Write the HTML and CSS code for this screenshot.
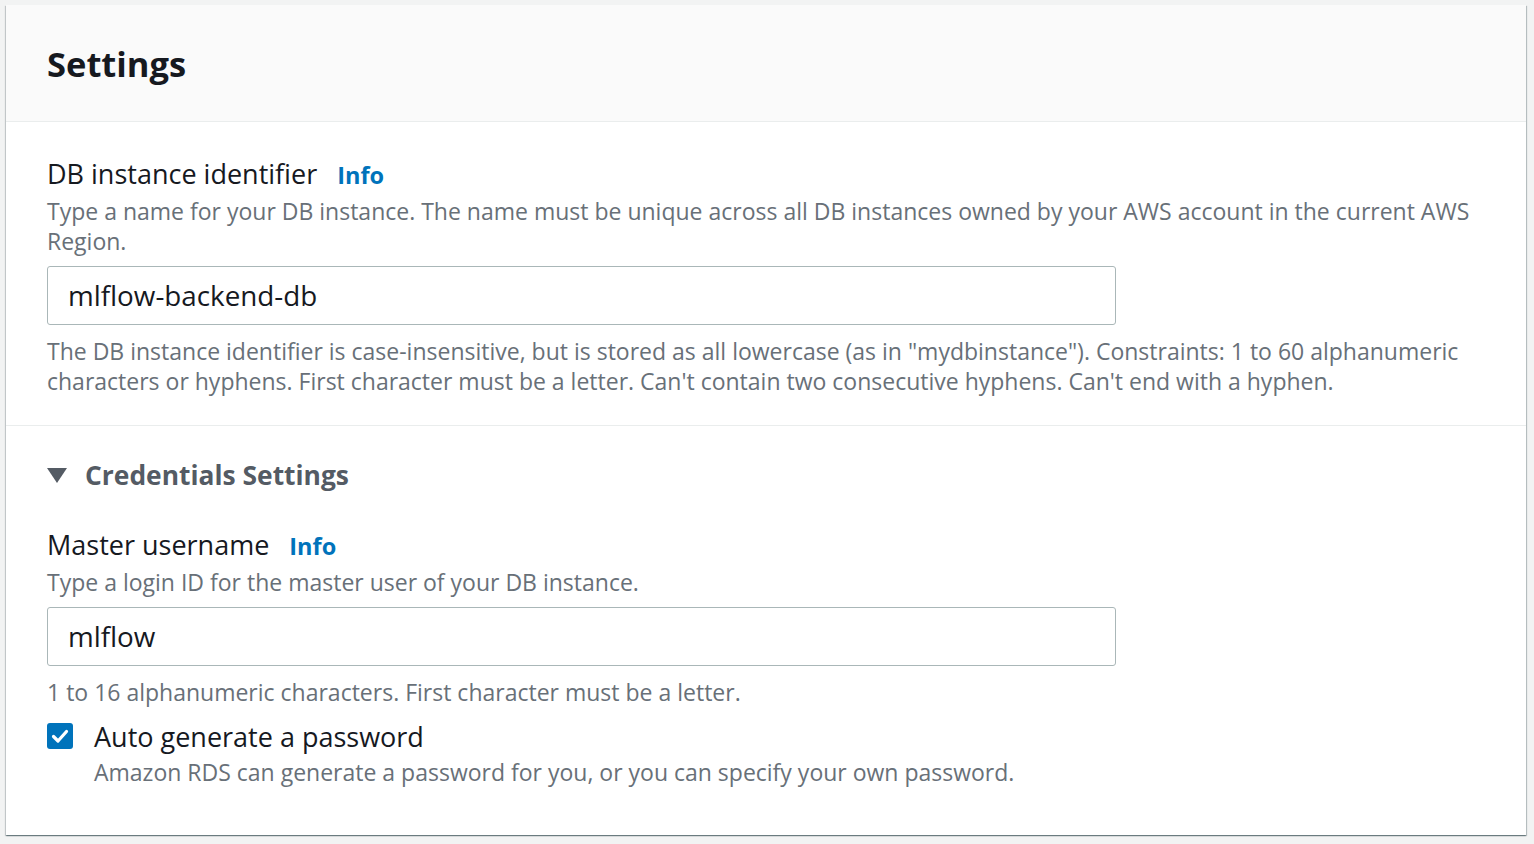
FILE: index.html
```html
<!DOCTYPE html>
<html lang="en">
<head>
<meta charset="utf-8">
<title>Settings</title>
<link rel="stylesheet" href="styles.css">
</head>
<body>
<div class="card">
  <div class="card-header">
    <h2 class="title">Settings</h2>
  </div>
  <div class="section first">
    <div class="label-row"><span class="label">DB instance identifier</span><a class="info">Info</a></div>
    <div class="desc">Type a name for your DB instance. The name must be unique across all DB instances owned by your AWS account in the current AWS Region.</div>
    <div class="input">mlflow-backend-db</div>
    <div class="constraint">The DB instance identifier is case-insensitive, but is stored as all lowercase (as in "mydbinstance"). Constraints: 1 to 60 alphanumeric characters or hyphens. First character must be a letter. Can't contain two consecutive hyphens. Can't end with a hyphen.</div>
  </div>
  <div class="section second">
    <div class="expander"><span class="caret"></span><span class="exp-title">Credentials Settings</span></div>
    <div class="label-row mu"><span class="label">Master username</span><a class="info">Info</a></div>
    <div class="desc">Type a login ID for the master user of your DB instance.</div>
    <div class="input">mlflow</div>
    <div class="constraint">1 to 16 alphanumeric characters. First character must be a letter.</div>
    <div class="check-row">
      <span class="checkbox"><svg width="26" height="26" viewBox="0 0 26 26"><path d="M6.5 13.5 L11 18 L19.5 8.5" fill="none" stroke="#fff" stroke-width="3.2" stroke-linecap="round" stroke-linejoin="round"/></svg></span>
      <div class="check-text">
        <div class="check-label">Auto generate a password</div>
        <div class="check-desc">Amazon RDS can generate a password for you, or you can specify your own password.</div>
      </div>
    </div>
  </div>
</div>
</body>
</html>
```
FILE: styles.css
```css
html, body {
  margin: 0;
  padding: 0;
}
body {
  background: #f2f3f3;
  font-family: "Open Sans", "Noto Sans", Arial, sans-serif;
  color: #16191f;
  padding: 5px 8px 9px 6px;
}
.card {
  background: #ffffff;
  box-shadow: 0 1px 1px 0 rgba(0, 28, 36, 0.35), 1px 1px 1px 0 rgba(0, 28, 36, 0.2), -1px 1px 1px 0 rgba(0, 28, 36, 0.15);
}
.card-header {
  background: #fafafa;
  border-bottom: 1px solid #eaeded;
  height: 117px;
  box-sizing: border-box;
  padding-left: 41px;
  display: flex;
  align-items: center;
}
.title {
  margin: 0;
  font-size: 34.5px;
  font-weight: 700;
  color: #16191f;
  line-height: 40px;
  position: relative;
  top: 1px;
}
.section {
  padding-left: 41px;
  padding-right: 41px;
}
.section.first {
  padding-top: 35px;
  padding-bottom: 29px;
  border-bottom: 1px solid #eaeded;
}
.section.second {
  padding-top: 32px;
  padding-bottom: 48px;
}
.label-row {
  display: flex;
  align-items: baseline;
  gap: 20px;
  line-height: 34px;
}
.label {
  font-size: 27px;
  color: #16191f;
}
.info {
  font-size: 23.5px;
  font-weight: 700;
  color: #0073bb;
}
.desc {
  margin-top: 4px;
  font-size: 23px;
  line-height: 30px;
  color: #687078;
}
.input {
  margin-top: 10px;
  width: 1069px;
  height: 59px;
  box-sizing: border-box;
  border: 1px solid #aab7b8;
  border-radius: 3px;
  padding-left: 20px;
  font-size: 27.8px;
  line-height: 57px;
  color: #16191f;
}
.constraint {
  margin-top: 11px;
  font-size: 23px;
  line-height: 30px;
  color: #687078;
}
.expander {
  display: flex;
  align-items: center;
  height: 34px;
  gap: 18px;
}
.caret {
  width: 0;
  height: 0;
  border-left: 10px solid transparent;
  border-right: 10px solid transparent;
  border-top: 15px solid #545b64;
  margin-top: 1px;
}
.exp-title {
  font-size: 26.4px;
  font-weight: 700;
  color: #545b64;
}
.label-row.mu {
  margin-top: 36px;
}
.check-row {
  margin-top: 13px;
  display: flex;
  gap: 21px;
}
.checkbox {
  width: 26px;
  height: 26px;
  margin-top: 3px;
  background: #0073bb;
  border-radius: 3px;
  display: block;
  flex: none;
}
.checkbox svg {
  display: block;
}
.check-label {
  font-size: 27px;
  line-height: 34px;
  color: #16191f;
}
.check-desc {
  margin-top: 3px;
  font-size: 23px;
  line-height: 30px;
  color: #687078;
}
```
